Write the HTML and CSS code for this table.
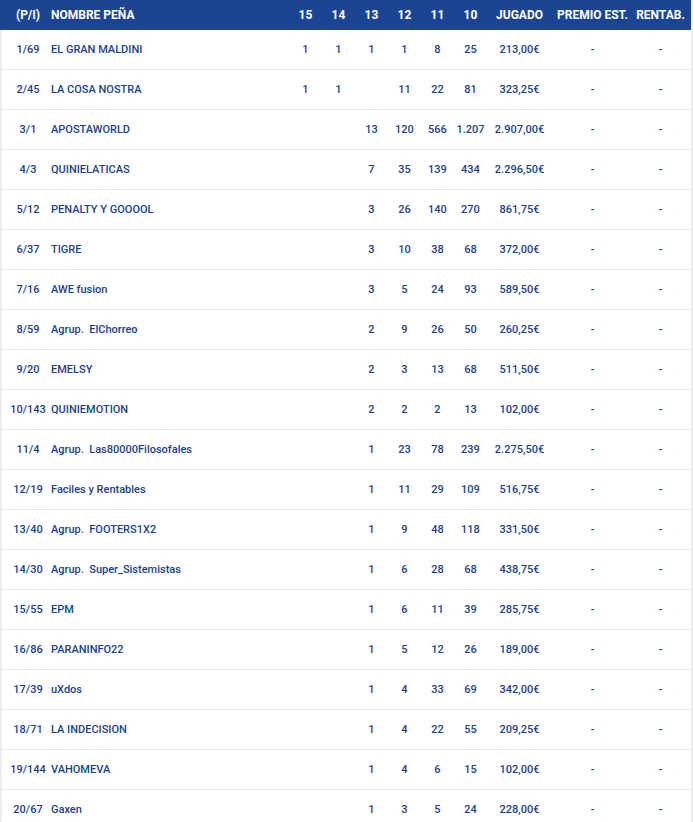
FILE: index.html
```html
<!DOCTYPE html>
<html lang="es">
<head>
<meta charset="utf-8">
<link rel="stylesheet" href="styles.css">
</head>
<body>
<div class="table">
  <div class="row head">
    <div class="c p">(P/I)</div><div class="n">NOMBRE PEÑA</div>
    <div class="c">15</div><div class="c">14</div><div class="c">13</div><div class="c">12</div><div class="c">11</div><div class="c">10</div>
    <div class="c">JUGADO</div><div class="c">PREMIO EST.</div><div class="c">RENTAB.</div>
  </div>
  <div class="row"><div class="c p">1/69</div><div class="n">EL GRAN MALDINI</div><div class="c">1</div><div class="c">1</div><div class="c">1</div><div class="c">1</div><div class="c">8</div><div class="c">25</div><div class="c">213,00€</div><div class="c">-</div><div class="c">-</div></div>
  <div class="row"><div class="c p">2/45</div><div class="n">LA COSA NOSTRA</div><div class="c">1</div><div class="c">1</div><div class="c"></div><div class="c">11</div><div class="c">22</div><div class="c">81</div><div class="c">323,25€</div><div class="c">-</div><div class="c">-</div></div>
  <div class="row"><div class="c p">3/1</div><div class="n">APOSTAWORLD</div><div class="c"></div><div class="c"></div><div class="c">13</div><div class="c">120</div><div class="c">566</div><div class="c">1.207</div><div class="c">2.907,00€</div><div class="c">-</div><div class="c">-</div></div>
  <div class="row"><div class="c p">4/3</div><div class="n">QUINIELATICAS</div><div class="c"></div><div class="c"></div><div class="c">7</div><div class="c">35</div><div class="c">139</div><div class="c">434</div><div class="c">2.296,50€</div><div class="c">-</div><div class="c">-</div></div>
  <div class="row"><div class="c p">5/12</div><div class="n">PENALTY Y GOOOOL</div><div class="c"></div><div class="c"></div><div class="c">3</div><div class="c">26</div><div class="c">140</div><div class="c">270</div><div class="c">861,75€</div><div class="c">-</div><div class="c">-</div></div>
  <div class="row"><div class="c p">6/37</div><div class="n">TIGRE</div><div class="c"></div><div class="c"></div><div class="c">3</div><div class="c">10</div><div class="c">38</div><div class="c">68</div><div class="c">372,00€</div><div class="c">-</div><div class="c">-</div></div>
  <div class="row"><div class="c p">7/16</div><div class="n">AWE fusion</div><div class="c"></div><div class="c"></div><div class="c">3</div><div class="c">5</div><div class="c">24</div><div class="c">93</div><div class="c">589,50€</div><div class="c">-</div><div class="c">-</div></div>
  <div class="row"><div class="c p">8/59</div><div class="n">Agrup.&nbsp; ElChorreo</div><div class="c"></div><div class="c"></div><div class="c">2</div><div class="c">9</div><div class="c">26</div><div class="c">50</div><div class="c">260,25€</div><div class="c">-</div><div class="c">-</div></div>
  <div class="row"><div class="c p">9/20</div><div class="n">EMELSY</div><div class="c"></div><div class="c"></div><div class="c">2</div><div class="c">3</div><div class="c">13</div><div class="c">68</div><div class="c">511,50€</div><div class="c">-</div><div class="c">-</div></div>
  <div class="row"><div class="c p">10/143</div><div class="n">QUINIEMOTION</div><div class="c"></div><div class="c"></div><div class="c">2</div><div class="c">2</div><div class="c">2</div><div class="c">13</div><div class="c">102,00€</div><div class="c">-</div><div class="c">-</div></div>
  <div class="row"><div class="c p">11/4</div><div class="n">Agrup.&nbsp; Las80000Filosofales</div><div class="c"></div><div class="c"></div><div class="c">1</div><div class="c">23</div><div class="c">78</div><div class="c">239</div><div class="c">2.275,50€</div><div class="c">-</div><div class="c">-</div></div>
  <div class="row"><div class="c p">12/19</div><div class="n">Faciles y Rentables</div><div class="c"></div><div class="c"></div><div class="c">1</div><div class="c">11</div><div class="c">29</div><div class="c">109</div><div class="c">516,75€</div><div class="c">-</div><div class="c">-</div></div>
  <div class="row"><div class="c p">13/40</div><div class="n">Agrup.&nbsp; FOOTERS1X2</div><div class="c"></div><div class="c"></div><div class="c">1</div><div class="c">9</div><div class="c">48</div><div class="c">118</div><div class="c">331,50€</div><div class="c">-</div><div class="c">-</div></div>
  <div class="row"><div class="c p">14/30</div><div class="n">Agrup.&nbsp; Super_Sistemistas</div><div class="c"></div><div class="c"></div><div class="c">1</div><div class="c">6</div><div class="c">28</div><div class="c">68</div><div class="c">438,75€</div><div class="c">-</div><div class="c">-</div></div>
  <div class="row"><div class="c p">15/55</div><div class="n">EPM</div><div class="c"></div><div class="c"></div><div class="c">1</div><div class="c">6</div><div class="c">11</div><div class="c">39</div><div class="c">285,75€</div><div class="c">-</div><div class="c">-</div></div>
  <div class="row"><div class="c p">16/86</div><div class="n">PARANINFO22</div><div class="c"></div><div class="c"></div><div class="c">1</div><div class="c">5</div><div class="c">12</div><div class="c">26</div><div class="c">189,00€</div><div class="c">-</div><div class="c">-</div></div>
  <div class="row"><div class="c p">17/39</div><div class="n">uXdos</div><div class="c"></div><div class="c"></div><div class="c">1</div><div class="c">4</div><div class="c">33</div><div class="c">69</div><div class="c">342,00€</div><div class="c">-</div><div class="c">-</div></div>
  <div class="row"><div class="c p">18/71</div><div class="n">LA INDECISION</div><div class="c"></div><div class="c"></div><div class="c">1</div><div class="c">4</div><div class="c">22</div><div class="c">55</div><div class="c">209,25€</div><div class="c">-</div><div class="c">-</div></div>
  <div class="row"><div class="c p">19/144</div><div class="n">VAHOMEVA</div><div class="c"></div><div class="c"></div><div class="c">1</div><div class="c">4</div><div class="c">6</div><div class="c">15</div><div class="c">102,00€</div><div class="c">-</div><div class="c">-</div></div>
  <div class="row"><div class="c p">20/67</div><div class="n">Gaxen</div><div class="c"></div><div class="c"></div><div class="c">1</div><div class="c">3</div><div class="c">5</div><div class="c">24</div><div class="c">228,00€</div><div class="c">-</div><div class="c">-</div></div>
</div>
</body>
</html>
```
FILE: styles.css
```css
html, body {
  margin: 0;
  padding: 0;
}
body {
  background: #eeeeee;
  font-family: Roboto, "Liberation Sans", Arial, sans-serif;
  font-size: 11px;
}
.table {
  width: 691px;
  background: #ffffff;
}
.row {
  display: grid;
  grid-template-columns: 51px 238px repeat(6, 33px) 65px 81px 55px;
  height: 39px;
  align-items: center;
  border-bottom: 1px solid #ebebeb;
  box-shadow: inset 2px 0 0 #eeeeee;
  color: #1c3f8c;
  font-weight: 500;
  white-space: nowrap;
}
.row.head {
  height: 30px;
  border-bottom: none;
  box-shadow: none;
  background: #1b4593;
  color: #ffffff;
  font-weight: 700;
  font-size: 12px;
}
.c {
  text-align: center;
}
.p {
  padding-left: 5px;
}
.n {
  text-align: left;
}
```
